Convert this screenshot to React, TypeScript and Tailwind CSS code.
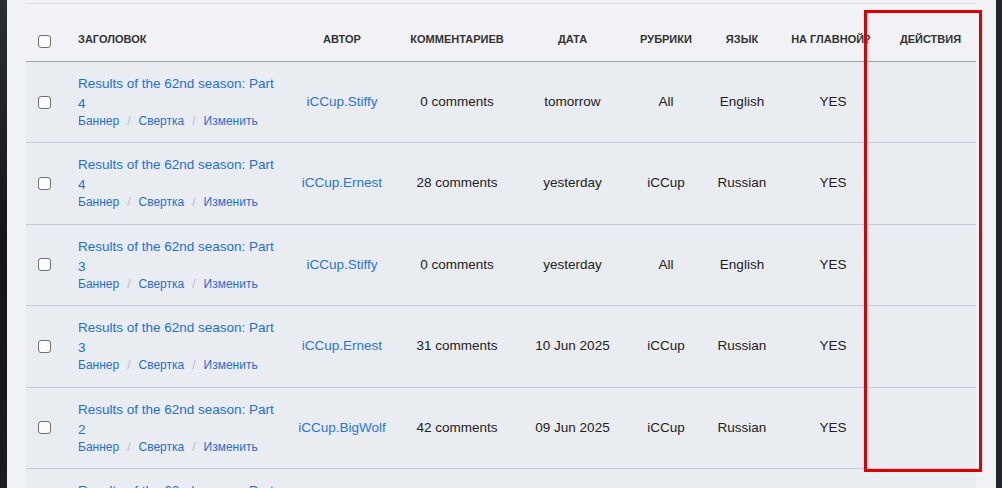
const posts = [
  { part: "4", author: "iCCup.Stiffy", comments: "0 comments", date: "tomorrow", rubric: "All", lang: "English" },
  { part: "4", author: "iCCup.Ernest", comments: "28 comments", date: "yesterday", rubric: "iCCup", lang: "Russian" },
  { part: "3", author: "iCCup.Stiffy", comments: "0 comments", date: "yesterday", rubric: "All", lang: "English" },
  { part: "3", author: "iCCup.Ernest", comments: "31 comments", date: "10 Jun 2025", rubric: "iCCup", lang: "Russian" },
  { part: "2", author: "iCCup.BigWolf", comments: "42 comments", date: "09 Jun 2025", rubric: "iCCup", lang: "Russian" },
  { part: "1", author: "iCCup.BigWolf", comments: "17 comments", date: "08 Jun 2025", rubric: "iCCup", lang: "Russian" },
];

const cols = "grid grid-cols-[40px_224px_104px_126px_105px_82px_70px_108px_91px]";

function Checkbox() {
  return (
    <span className="block w-[13px] h-[13px] rounded-[3px] border border-[#6f6f6f] bg-[#fbfbfc]" />
  );
}

function Sep() {
  return <span className="text-[#b7bfcb] mx-[8px]">/</span>;
}

export default function App() {
  return (
    <div
      className="relative w-[1002px] h-[488px] overflow-hidden bg-[#22242c]"
      style={{ fontFamily: '"Liberation Sans", Arial, sans-serif' }}
    >
      <div className="absolute inset-y-0 left-0 w-[7px] bg-gradient-to-b from-[#2c2e36] via-[#15161b] to-[#1c1d24]" />
      <div className="ml-[7px] w-[989px] h-full bg-[#f1f2f6] pl-[19px] pt-[3px]">
        <div className="w-[950px] border-t border-[#dfe1e6]">
          {/* header */}
          <div className={`${cols} h-[58px] border-b border-[#9ea3aa] text-[11px] font-bold uppercase text-[#333]`}>
            <div className="flex items-end pb-[13px] pl-[12px]">
              <Checkbox />
            </div>
            <div className="flex items-end pb-[14px] pl-[12px]">Заголовок</div>
            <div className="flex items-end justify-center pb-[14px]">Автор</div>
            <div className="flex items-end justify-center pb-[14px]">Комментариев</div>
            <div className="flex items-end justify-center pb-[14px]">Дата</div>
            <div className="flex items-end justify-center pb-[14px]">Рубрики</div>
            <div className="flex items-end justify-center pb-[14px]">Язык</div>
            <div className="flex items-end justify-center pb-[14px] whitespace-nowrap">На главной?</div>
            <div className="flex items-end justify-center pb-[14px]">Действия</div>
          </div>

          {/* rows */}
          {posts.map((p, i) => (
            <div
              key={i}
              className={`${cols} h-[81.4px] bg-[#e9ecf1] border-b border-[#c4ccd8] text-[13.5px] text-[#222]`}
            >
              <div className="flex items-center pl-[12px]">
                <Checkbox />
              </div>
              <div className="pl-[12px] pr-[8px] pt-[12px]">
                <a className="block text-[#1f6fdc] leading-[20px]">
                  Results of the 62nd season: Part {p.part}
                </a>
                <div className="text-[12px] leading-[15px] text-[#2a6fd0]">
                  <a>Баннер</a>
                  <Sep />
                  <a>Свертка</a>
                  <Sep />
                  <a>Изменить</a>
                </div>
              </div>
              <div className="flex items-center justify-center text-[#2b74de]">{p.author}</div>
              <div className="flex items-center justify-center">{p.comments}</div>
              <div className="flex items-center justify-center">{p.date}</div>
              <div className="flex items-center justify-center">{p.rubric}</div>
              <div className="flex items-center justify-center">{p.lang}</div>
              <div className="flex items-center justify-center pl-[4px]">YES</div>
              <div />
            </div>
          ))}
        </div>
      </div>

      {/* highlight frame */}
      <div className="absolute left-[864px] top-[10px] w-[118px] h-[462px] border-[3px] border-[#dd0000] pointer-events-none" />
    </div>
  );
}
